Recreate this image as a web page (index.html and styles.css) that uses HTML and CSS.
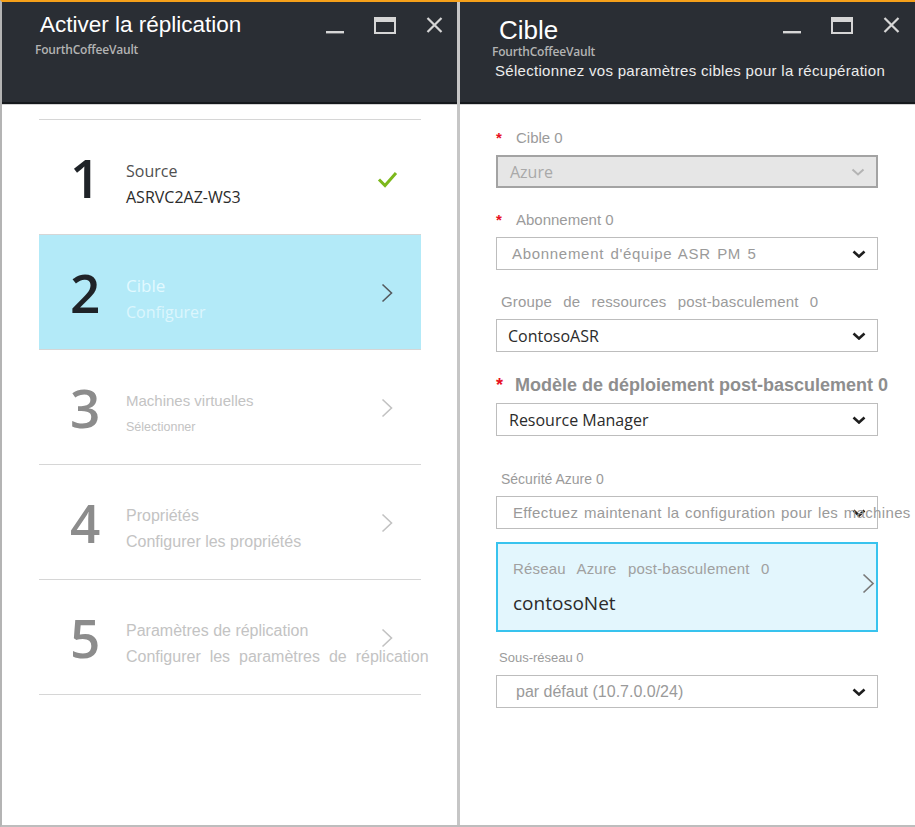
FILE: index.html
```html
<!DOCTYPE html>
<html lang="fr">
<head>
<meta charset="utf-8">
<title>Activer la réplication</title>
<link rel="stylesheet" href="styles.css">
</head>
<body>
<div class="frame">
  <section class="blade blade-left">
    <header class="blade-head head-left">
      <div class="head-text head-text-left">
        <h1 class="title title-left">Activer la réplication</h1>
        <div class="vault">FourthCoffeeVault</div>
      </div>
      <div class="controls">
        <svg class="ctl" width="18" height="17" viewBox="0 0 18 17"><rect x="0" y="14" width="18" height="2.4" fill="#d6d6d6"/></svg>
        <svg class="ctl" width="22" height="17" viewBox="0 0 22 17"><rect x="1" y="1" width="20" height="15" fill="none" stroke="#d6d6d6" stroke-width="2"/><rect x="1" y="1" width="20" height="4" fill="#d6d6d6"/></svg>
        <svg class="ctl" width="17" height="16" viewBox="0 0 17 16"><path d="M1.5 1 L15.5 15 M15.5 1 L1.5 15" stroke="#d6d6d6" stroke-width="2.2" fill="none"/></svg>
      </div>
    </header>
    <div class="blade-body">
      <ol class="steps">
        <li class="step step-done">
          <span class="num">1</span>
          <div class="step-text">
            <div class="step-title">Source</div>
            <div class="step-sub">ASRVC2AZ-WS3</div>
          </div>
          <svg class="step-icon check" width="21" height="20" viewBox="0 0 21 20"><path d="M2 10.5 L8 16.5 L19 4" fill="none" stroke="#7cb81c" stroke-width="3"/></svg>
        </li>
        <li class="step step-active">
          <span class="num">2</span>
          <div class="step-text">
            <div class="step-title">Cible</div>
            <div class="step-sub">Configurer</div>
          </div>
          <svg class="step-icon chev" width="12" height="20" viewBox="0 0 12 20"><path d="M1.5 1.5 L10.5 10 L1.5 18.5" fill="none" stroke="currentColor" stroke-width="1.6"/></svg>
        </li>
        <li class="step step-todo">
          <span class="num">3</span>
          <div class="step-text">
            <div class="step-title step-title-sm">Machines virtuelles</div>
            <div class="step-sub step-sub-sm">Sélectionner</div>
          </div>
          <svg class="step-icon chev" width="12" height="20" viewBox="0 0 12 20"><path d="M1.5 1.5 L10.5 10 L1.5 18.5" fill="none" stroke="currentColor" stroke-width="1.6"/></svg>
        </li>
        <li class="step step-todo">
          <span class="num">4</span>
          <div class="step-text">
            <div class="step-title">Propriétés</div>
            <div class="step-sub">Configurer les propriétés</div>
          </div>
          <svg class="step-icon chev" width="12" height="20" viewBox="0 0 12 20"><path d="M1.5 1.5 L10.5 10 L1.5 18.5" fill="none" stroke="currentColor" stroke-width="1.6"/></svg>
        </li>
        <li class="step step-todo">
          <span class="num">5</span>
          <div class="step-text">
            <div class="step-title">Paramètres de réplication</div>
            <div class="step-sub step-sub-wide">Configurer les paramètres de réplication</div>
          </div>
          <svg class="step-icon chev" width="12" height="20" viewBox="0 0 12 20"><path d="M1.5 1.5 L10.5 10 L1.5 18.5" fill="none" stroke="currentColor" stroke-width="1.6"/></svg>
        </li>
      </ol>
    </div>
  </section>

  <section class="blade blade-right">
    <header class="blade-head head-right">
      <div class="head-text head-text-right">
        <h1 class="title title-right">Cible</h1>
        <div class="vault">FourthCoffeeVault</div>
        <div class="desc">Sélectionnez vos paramètres cibles pour la récupération</div>
      </div>
      <div class="controls">
        <svg class="ctl" width="18" height="17" viewBox="0 0 18 17"><rect x="0" y="14" width="18" height="2.4" fill="#d6d6d6"/></svg>
        <svg class="ctl" width="22" height="17" viewBox="0 0 22 17"><rect x="1" y="1" width="20" height="15" fill="none" stroke="#d6d6d6" stroke-width="2"/><rect x="1" y="1" width="20" height="4" fill="#d6d6d6"/></svg>
        <svg class="ctl" width="17" height="16" viewBox="0 0 17 16"><path d="M1.5 1 L15.5 15 M15.5 1 L1.5 15" stroke="#d6d6d6" stroke-width="2.2" fill="none"/></svg>
      </div>
    </header>
    <div class="blade-body">
      <div class="form">
        <div class="field">
          <div class="label"><span class="req">*</span>Cible 0</div>
          <div class="select select-disabled">
            <span class="value">Azure</span>
            <svg class="dd" width="14" height="8" viewBox="0 0 14 8"><path d="M1.5 1.5 L7 6.5 L12.5 1.5" fill="none" stroke="#b4b4b4" stroke-width="2"/></svg>
          </div>
        </div>
        <div class="field">
          <div class="label"><span class="req">*</span>Abonnement 0</div>
          <div class="select select-sub">
            <span class="value">Abonnement d'équipe ASR PM 5</span>
            <svg class="dd" width="14" height="8" viewBox="0 0 14 8"><path d="M1.5 1.5 L7 6.5 L12.5 1.5" fill="none" stroke="#1e1e1e" stroke-width="2.6"/></svg>
          </div>
        </div>
        <div class="field">
          <div class="label label-plain label-wide">Groupe de ressources post-basculement 0</div>
          <div class="select select-strong">
            <span class="value">ContosoASR</span>
            <svg class="dd" width="14" height="8" viewBox="0 0 14 8"><path d="M1.5 1.5 L7 6.5 L12.5 1.5" fill="none" stroke="#1e1e1e" stroke-width="2.6"/></svg>
          </div>
        </div>
        <div class="field">
          <div class="label label-big"><span class="req req-big">*</span>Modèle de déploiement post-basculement 0</div>
          <div class="select select-strong select-rm">
            <span class="value">Resource Manager</span>
            <svg class="dd" width="14" height="8" viewBox="0 0 14 8"><path d="M1.5 1.5 L7 6.5 L12.5 1.5" fill="none" stroke="#1e1e1e" stroke-width="2.6"/></svg>
          </div>
        </div>
        <div class="field field-sec">
          <div class="label label-plain label-sm">Sécurité Azure 0</div>
          <div class="select select-long">
            <svg class="dd dd-under" width="14" height="8" viewBox="0 0 14 8"><path d="M1.5 1.5 L7 6.5 L12.5 1.5" fill="none" stroke="#1e1e1e" stroke-width="2.6"/></svg>
            <span class="value">Effectuez maintenant la configuration pour les machines</span>
          </div>
        </div>
        <div class="card">
          <div class="card-text">
            <div class="card-label">Réseau Azure post-basculement 0</div>
            <div class="card-value">contosoNet</div>
          </div>
          <svg class="card-chev" width="13" height="21" viewBox="0 0 13 21"><path d="M1.5 1.5 L11 10.5 L1.5 19.5" fill="none" stroke="#7a7a7a" stroke-width="1.7"/></svg>
        </div>
        <div class="field">
          <div class="label label-plain label-xs">Sous-réseau 0</div>
          <div class="select select-subnet">
            <span class="value">par défaut (10.7.0.0/24)</span>
            <svg class="dd" width="14" height="8" viewBox="0 0 14 8"><path d="M1.5 1.5 L7 6.5 L12.5 1.5" fill="none" stroke="#1e1e1e" stroke-width="2.6"/></svg>
          </div>
        </div>
      </div>
    </div>
  </section>
</div>
</body>
</html>
```

FILE: styles.css
```css
html, body {
  margin: 0;
  padding: 0;
  background: #ffffff;
}

.frame {
  width: 915px;
  height: 827px;
  box-sizing: border-box;
  border-top: 2px solid #f5a01a;
  border-left: 2px solid #b4b4b4;
  border-bottom: 2px solid #bdbdbd;
  display: flex;
  background: #ffffff;
  overflow: hidden;
}

.blade {
  display: flex;
  flex-direction: column;
  min-width: 0;
}

.blade-left {
  flex: none;
  width: 455px;
}

.blade-right {
  flex: none;
  width: 455px;
  border-left: 3px solid #c6c6c6;
}

/* ---------- Header ---------- */
.blade-head {
  height: 102px;
  box-sizing: border-box;
  background: #2a2e34;
  border-bottom: 2px solid #16191d;
  display: flex;
  align-items: flex-start;
}

.head-left {
  padding: 0 14px 0 33px;
}

.head-right {
  padding: 0 15px 0 32px;
}

.head-text {
  flex: 1 1 auto;
  min-width: 0;
}

.head-text-left {
  padding-top: 10px;
}

.head-text-right {
  padding-top: 14px;
}

.title {
  margin: 0;
  font-family: "Liberation Sans", Arial, sans-serif;
  font-weight: 400;
  color: #ffffff;
  white-space: nowrap;
}

.title-left {
  font-size: 22.5px;
  line-height: 25px;
  margin-left: 5px;
}

.title-right {
  font-size: 26px;
  line-height: 28px;
  margin-left: 7px;
}

.vault {
  font-family: "Open Sans", "Noto Sans", sans-serif;
  font-weight: 600;
  font-size: 12px;
  line-height: 16px;
  color: #b3b3b3;
  letter-spacing: -0.2px;
  white-space: nowrap;
}

.title-left + .vault {
  margin-top: 5px;
}

.desc {
  margin-top: 2px;
  margin-left: 3px;
  font-family: "Liberation Sans", Arial, sans-serif;
  font-size: 15px;
  line-height: 18px;
  letter-spacing: 0.3px;
  color: #ececec;
  white-space: nowrap;
}

.controls {
  flex: none;
  margin-top: 15px;
  display: flex;
  align-items: flex-start;
  gap: 30px;
}

.ctl {
  display: block;
}

/* ---------- Body ---------- */
.blade-body {
  flex: 1 1 auto;
  border-top: 1px solid #d4d4d4;
}

/* ---------- Steps ---------- */
.steps {
  list-style: none;
  margin: 14px 36px 0 37px;
  padding: 0;
}

.step {
  height: 115px;
  box-sizing: border-box;
  border-top: 1px solid #d6d6d6;
  display: flex;
  align-items: flex-start;
}

.step:last-child {
  height: 116px;
  border-bottom: 1px solid #d6d6d6;
}

.num {
  flex: none;
  width: 56px;
  margin-left: 31px;
  margin-top: 31px;
  font-family: "Open Sans", "Noto Sans", sans-serif;
  font-size: 53px;
  line-height: 53px;
  font-weight: 600;
  color: #1f2328;
}

.step-text {
  flex: 1 1 0;
  min-width: 0;
  padding-top: 41px;
  white-space: nowrap;
}

.step-title {
  font-family: "Liberation Sans", Arial, sans-serif;
  font-size: 16px;
  line-height: 20px;
}

.step-sub {
  margin-top: 6px;
  font-family: "Liberation Sans", Arial, sans-serif;
  font-size: 16px;
  line-height: 20px;
}

.step-title-sm {
  font-size: 15px;
}

.step-sub-sm {
  font-size: 12.5px;
}

.step-sub-wide {
  word-spacing: 4.5px;
}

.step-icon {
  flex: none;
  display: block;
  margin-top: 48px;
  margin-right: 28px;
}

.step-icon.check {
  margin-top: 49px;
  margin-right: 23px;
}

.step-done .step-title {
  font-family: "Open Sans", "Noto Sans", sans-serif;
  color: #505050;
}

.step-done .step-sub {
  font-family: "Open Sans", "Noto Sans", sans-serif;
  color: #2b2b2b;
}

.step-active {
  background: #b3eaf8;
}

.step-active .step-title {
  font-family: "Open Sans", "Noto Sans", sans-serif;
  font-size: 17px;
  color: #e2f9ff;
}

.step-active .step-sub {
  font-family: "Open Sans", "Noto Sans", sans-serif;
  color: #dcf6fd;
}

.step-active .chev {
  color: #555a5e;
}

.step-todo .num {
  color: #8c8c8c;
}

.step-todo .step-title,
.step-todo .step-sub {
  color: #c3c3c3;
}

.step-todo .chev {
  color: #c2c2c2;
}

/* ---------- Form ---------- */
.form {
  padding: 23px 37px 0 36px;
}

.field {
  margin-bottom: 22px;
}

.label {
  font-family: "Liberation Sans", Arial, sans-serif;
  font-size: 15px;
  line-height: 20px;
  color: #9b9b9b;
  margin-bottom: 7px;
  white-space: nowrap;
}

.req {
  display: inline-block;
  width: 20px;
  color: #e81123;
  font-weight: 700;
}

.req-big {
  width: 19px;
}

.label-plain {
  padding-left: 5px;
}

.label-wide {
  word-spacing: 7px;
  letter-spacing: 0.15px;
}

.label-big {
  font-weight: 700;
  font-size: 18px;
  line-height: 22px;
  color: #8e8e8e;
}

.label-sm {
  font-size: 14px;
}

.label-xs {
  font-size: 13px;
  padding-left: 3px;
}

.field-sec {
  margin-top: 33px;
  margin-bottom: 13px;
}

.select {
  height: 33px;
  box-sizing: border-box;
  border: 1px solid #bdbdbd;
  background: #ffffff;
  display: flex;
  align-items: center;
  padding: 0 11px 0 15px;
  font-family: "Liberation Sans", Arial, sans-serif;
  font-size: 15px;
  color: #9a9a9a;
  white-space: nowrap;
  position: relative;
}

.value {
  flex: 1 1 auto;
  min-width: 0;
}

.dd {
  flex: none;
  display: block;
}

.select-disabled {
  background: #e6e6e6;
  border: 2px solid #a3a3a3;
  padding-left: 12px;
  font-family: "Open Sans", "Noto Sans", sans-serif;
  font-size: 16px;
  color: #a9a9a9;
}

.select-sub {
  letter-spacing: 0.7px;
  word-spacing: 1.5px;
}

.select-strong {
  padding-left: 11px;
  font-family: "Open Sans", "Noto Sans", sans-serif;
  font-size: 16px;
  color: #2b2b2b;
}

.select-rm {
  padding-left: 12px;
}

.select-long {
  padding-left: 16px;
  letter-spacing: 0.35px;
  word-spacing: 1px;
  justify-content: flex-start;
}

.select-long .dd-under {
  position: absolute;
  right: 11px;
  top: 12px;
}

.select-long .value {
  position: relative;
  overflow: visible;
}

.select-subnet {
  padding-left: 19px;
  font-size: 16px;
}

/* ---------- Card ---------- */
.card {
  height: 90px;
  box-sizing: border-box;
  border: 2px solid #38c3ee;
  background: #e3f6fd;
  padding: 15px 1px 0 15px;
  display: flex;
  align-items: flex-start;
  margin-bottom: 16px;
}

.card-text {
  flex: 1 1 auto;
  min-width: 0;
  white-space: nowrap;
}

.card-label {
  font-family: "Liberation Sans", Arial, sans-serif;
  font-size: 15px;
  line-height: 20px;
  color: #a0a0a0;
  word-spacing: 7px;
  letter-spacing: 0.2px;
}

.card-value {
  margin-top: 12px;
  font-family: "Open Sans", "Noto Sans", sans-serif;
  font-size: 19px;
  line-height: 24px;
  color: #2b2b2b;
}

.card-chev {
  flex: none;
  display: block;
  margin-top: 14px;
}
```
